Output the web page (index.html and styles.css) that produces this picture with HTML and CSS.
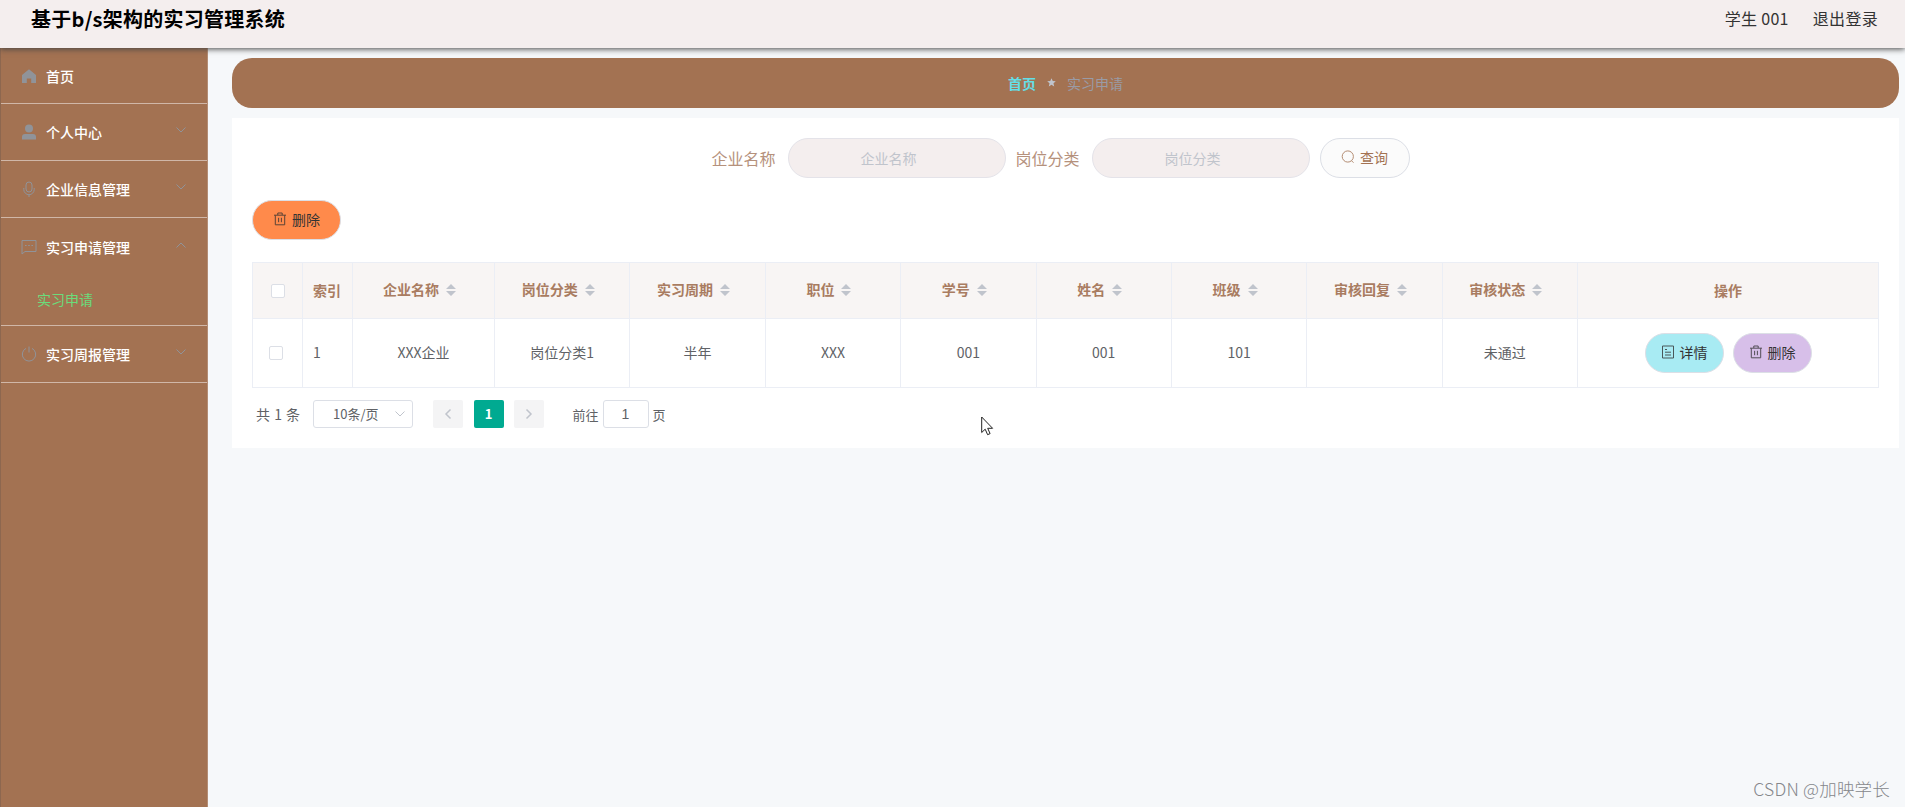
FILE: index.html
```
<!DOCTYPE html>
<html lang="zh-CN">
<head>
    <meta charset="UTF-8">
    <meta name="viewport" content="width=device-width, initial-scale=1.0">
    <title>基于b/s架构的实习管理系统</title>
    <link rel="stylesheet" href="styles.css">
</head>
<body>

    <!-- shared icons -->
    <svg width="0" height="0" class="icon-defs">
        <symbol id="icon-delete" viewBox="0 0 14 14">
            <path d="M1 3.200h12M4.800 3V1h4.400v2M2.300 3.200v9.600h9.400V3.200M5.600 5.800v4.400M8.400 5.800v4.400"/>
        </symbol>
        <symbol id="icon-arrow" viewBox="0 0 12 12">
            <path d="M1.500 3.500L6 8l4.500-4.500"/>
        </symbol>
    </svg>

    <header class="header">
        <h1 class="title">基于b/s架构的实习管理系统</h1>
        <div class="user">
            <span>学生 001</span>
            <span>退出登录</span>
        </div>
    </header>

    <div class="container">
        <aside class="sidebar">
            <div class="menu-item home">
                <svg class="menu-icon solid" viewBox="0 0 16 16"><path d="M8 1.200L15 7v8h-4.800v-4.500H5.800V15H1V7z"/></svg>
                <span>首页</span>
            </div>
            <div class="menu-item">
                <svg class="menu-icon solid" viewBox="0 0 16 16"><circle cx="8" cy="4.500" r="4"/><path d="M1 15.500v-2.500q0-3 3-3h8q3 0 3 3v2.500z"/></svg>
                <span>个人中心</span>
                <svg class="arrow"><use href="#icon-arrow"/></svg>
            </div>
            <div class="menu-item">
                <svg class="menu-icon" viewBox="0 0 16 16"><rect x="5" y="1" width="6" height="10" rx="3"/><path d="M2.800 7v1.500a5.200 5.200 0 0 0 10.400 0V7M8 13.700V16"/></svg>
                <span>企业信息管理</span>
                <svg class="arrow"><use href="#icon-arrow"/></svg>
            </div>
            <div class="menu-group">
                <div class="menu-item">
                    <svg class="menu-icon" viewBox="0 0 16 16"><path d="M1 1.500h14v11H4L1 15z"/><path d="M4 6.500h1.600M7.200 6.500h1.600M10.400 6.500H12"/></svg>
                    <span>实习申请管理</span>
                    <svg class="arrow up"><use href="#icon-arrow"/></svg>
                </div>
                <div class="submenu-item">实习申请</div>
            </div>
            <div class="menu-item">
                <svg class="menu-icon" viewBox="0 0 16 16"><path d="M5 2.400a6.700 6.700 0 1 0 6 0M8 .5v6"/></svg>
                <span>实习周报管理</span>
                <svg class="arrow"><use href="#icon-arrow"/></svg>
            </div>
        </aside>

        <main class="main">
            <div class="breadcrumb">
                <b>首页</b>
                <svg class="star" viewBox="0 0 10 10"><path d="M5 .3l1.400 3.100 3.400.3-2.600 2.200.8 3.500L5 7.600 2 9.400l.8-3.500L.2 3.700l3.400-.3z"/></svg>
                <span>实习申请</span>
            </div>

            <div class="card">
                <div class="search">
                    <label>企业名称</label>
                    <input type="text" placeholder="企业名称">
                    <label>岗位分类</label>
                    <input type="text" placeholder="岗位分类">
                    <button class="btn btn-search">
                        <svg viewBox="0 0 14 14"><circle cx="6.800" cy="6.500" r="5.600"/><path d="M10.500 10.700l2 2"/></svg>
                        查询
                    </button>
                </div>

                <button class="btn btn-delete"><svg><use href="#icon-delete"/></svg>删除</button>

                <table>
                    <colgroup>
                        <col class="col-check">
                        <col class="col-index">
                        <col class="col-company">
                        <col span="8">
                        <col class="col-action">
                    </colgroup>
                    <thead>
                        <tr id="table-head"></tr>
                    </thead>
                    <tbody>
                        <tr>
                            <td><span class="checkbox"></span></td>
                            <td class="left">1</td>
                            <td>XXX企业</td>
                            <td>岗位分类1</td>
                            <td>半年</td>
                            <td>XXX</td>
                            <td>001</td>
                            <td>001</td>
                            <td>101</td>
                            <td></td>
                            <td class="status">未通过</td>
                            <td>
                                <div class="actions">
                                    <button class="btn btn-detail"><svg viewBox="0 0 14 14"><path d="M1.500 1h11v12h-11zM4 4.500h2M4 7.200h6M4 10h6"/></svg>详情</button>
                                    <button class="btn btn-remove"><svg><use href="#icon-delete"/></svg>删除</button>
                                </div>
                            </td>
                        </tr>
                    </tbody>
                </table>

                <div class="pagination">
                    <span class="total">共 1 条</span>
                    <div class="page-size">10条/页<svg><use href="#icon-arrow"/></svg></div>
                    <span class="page prev"><svg><use href="#icon-arrow"/></svg></span>
                    <span class="page active">1</span>
                    <span class="page next"><svg><use href="#icon-arrow"/></svg></span>
                    <span class="jump">前往</span>
                    <input type="text" value="1">
                    <span>页</span>
                </div>
            </div>
        </main>
    </div>

    <svg class="cursor" viewBox="0 0 13 20"><path d="M.7 1v15.500l3.500-3.300 2.400 5.500 2.500-1.100-2.400-5.300h4.900z"/></svg>
    <div class="watermark">CSDN @加映学长</div>

    <script>
        const columns = ["企业名称", "岗位分类", "实习周期", "职位", "学号", "姓名", "班级", "审核回复", "审核状态"];

        function loadHead() {
            const sort = '<svg class="sort" viewBox="0 0 10 14"><path d="M0 6L5 1l5 5zM0 8l5 5 5-5z"/></svg>';
            let html = '<th><span class="checkbox head"></span></th><th class="left">索引</th>';
            columns.forEach(name => {
                html += `<th class="sortable">${name}${sort}</th>`;
            });
            html += "<th>操作</th>";
            document.getElementById("table-head").innerHTML = html;
        }

        loadHead();
    </script>

</body>
</html>
```
FILE: styles.css
```
* {
    box-sizing: border-box;
}
body {
    margin: 0;
    height: 100vh;
    overflow: hidden;
    display: flex;
    flex-direction: column;
    background-color: #f6f8fa;
    color: #606266;
    font-family: "Noto Sans CJK SC", sans-serif;
    font-size: 14px;
}
svg {
    fill: none;
    stroke: currentColor;
}
button, input {
    font-family: inherit;
}
.icon-defs {
    position: absolute;
}
.header {
    position: relative;
    z-index: 1;
    flex: none;
    height: 48px;
    padding: 0 27px 10px 31px;
    display: flex;
    justify-content: space-between;
    align-items: center;
    background-color: #f4eeee;
    box-shadow: 0 1px 6px #444;
}
.title {
    margin: 0;
    color: #000;
    font-size: 20px;
    line-height: 38px;
    letter-spacing: 0.25px;
}
.user {
    display: flex;
    gap: 24px;
    padding-bottom: 2px;
    color: #333;
    font-size: 16px;
    line-height: 36px;
    letter-spacing: 0.3px;
}
.container {
    flex: 1;
    display: flex;
}
.sidebar {
    width: 208px;
    flex: none;
    background-color: #a37252;
    border-left: 1px solid #8d674f;
    border-right: 1px solid #b48d75;
}
.menu-item {
    height: 57px;
    padding: 0 20px 0 20px;
    display: flex;
    align-items: center;
    color: #fff;
    border-bottom: 1px solid #d0b7a8;
}
.home {
    height: 56px;
}
.menu-item span {
    flex: 1;
    font-weight: 500;
}
.menu-group {
    border-bottom: 1px solid #d0b7a8;
}
.menu-group .menu-item {
    border-bottom: none;
}
.menu-icon {
    width: 16px;
    height: 16px;
    margin-right: 9px;
    color: #909399;
}
.solid {
    fill: currentColor;
    stroke: none;
}
.arrow {
    width: 12px;
    height: 12px;
    margin-top: -4px;
    color: #909399;
}
.up {
    transform: rotate(180deg);
}
.submenu-item {
    height: 50px;
    padding-left: 36px;
    line-height: 48px;
    color: #6bdc7b;
}
.main {
    flex: 1;
    padding: 10px 6px 0 24px;
}
.breadcrumb {
    height: 50px;
    padding-bottom: 1px;
    display: flex;
    justify-content: center;
    align-items: center;
    gap: 11px;
    border-radius: 20px;
    background-color: #a37252;
    color: #9a9ba5;
}
.breadcrumb b {
    color: #63dfe7;
}
.star {
    width: 9px;
    height: 9px;
    fill: #c0c4cc;
    stroke: none;
}
.card {
    height: 330px;
    margin-top: 10px;
    padding: 20px;
    background-color: #fff;
}
.search {
    display: flex;
    justify-content: center;
    align-items: center;
    padding-right: 10px;
}
.search label {
    margin-right: 12px;
    color: #b5917c;
    font-size: 16px;
}
.search input {
    width: 218px;
    height: 40px;
    margin-right: 10px;
    padding: 0 24px 1px 8px;
    border: 1px solid #e4e3e9;
    border-radius: 20px;
    background-color: #f4eeee;
    text-align: center;
    font-size: 14px;
}
.search input::placeholder {
    color: #c0c4cc;
}
.btn {
    height: 40px;
    display: flex;
    justify-content: center;
    align-items: center;
    gap: 5px;
    padding: 0 0 2px;
    border: 1px solid #dcdfe6;
    border-radius: 20px;
    color: #333;
    font-size: 14px;
}
.btn svg {
    width: 14px;
    height: 14px;
    opacity: 0.8;
}
.btn-search {
    width: 90px;
    background-color: #fbfbfb;
    color: #a37252;
}
.btn-delete {
    width: 89px;
    margin-top: 22px;
    background-color: #ff8a4b;
}
table {
    width: 1627px;
    margin-top: 22px;
    table-layout: fixed;
    border-collapse: collapse;
}
.col-check, .col-index {
    width: 50px;
}
.col-company {
    width: 142px;
}
.col-action {
    width: 301px;
}
th, td {
    padding: 0 0 2px;
    border: 1px solid #ebeef5;
    text-align: center;
}
th {
    height: 56px;
    background-color: #f8f5f4;
    color: #a97c61;
}
td {
    height: 69px;
}
th.sortable {
    padding: 0 8px 4px 0;
}
.left {
    padding-left: 10px;
    text-align: left;
}
.status {
    padding-right: 10px;
}
.sort {
    width: 10px;
    height: 14px;
    margin-left: 7px;
    vertical-align: -2px;
    fill: #c0c4cc;
    stroke: none;
}
.checkbox {
    display: block;
    width: 14px;
    height: 14px;
    margin-top: 2px;
    margin-left: 16px;
    border: 1px solid #dcdfe6;
    border-radius: 2px;
    background-color: #fff;
}
.head {
    margin-left: 18px;
}
.actions {
    display: flex;
    justify-content: center;
    gap: 9px;
    padding-top: 2px;
}
.actions .btn {
    width: 79px;
}
.btn-detail {
    background-color: #a8ebf3;
}
.btn-remove {
    background-color: #d7bfe9;
}
.pagination {
    height: 28px;
    margin-top: 12px;
    padding-left: 4px;
    display: flex;
    align-items: center;
    font-size: 13px;
}
.total {
    width: 57px;
    padding-bottom: 1px;
    font-size: 14px;
    word-spacing: 1px;
}
.page-size {
    width: 100px;
    height: 28px;
    margin-right: 20px;
    padding: 0 6px 1px 19px;
    display: flex;
    justify-content: space-between;
    align-items: center;
    border: 1px solid #dcdfe6;
    border-radius: 3px;
}
.page-size svg, .page svg {
    width: 12px;
    height: 12px;
    color: #c0c4cc;
}
.page {
    width: 30px;
    height: 28px;
    margin-right: 10.5px;
    display: flex;
    justify-content: center;
    align-items: center;
    border-radius: 2px;
    background-color: #f4f4f5;
}
.page svg {
    stroke-width: 1.5;
}
.active {
    padding-bottom: 1px;
    background-color: #00aa91;
    color: #fff;
    font-weight: bold;
}
.prev svg {
    transform: rotate(90deg);
}
.next svg {
    transform: rotate(-90deg);
}
.jump {
    margin-left: 18px;
}
.pagination input {
    width: 46px;
    height: 28px;
    margin: 0 4px;
    padding: 0;
    border: 1px solid #dcdfe6;
    border-radius: 3px;
    color: #606266;
    text-align: center;
    font-size: 14px;
    font-family: "Liberation Sans", sans-serif;
}
.cursor {
    position: absolute;
    left: 981px;
    top: 416px;
    width: 13px;
    height: 20px;
    fill: #fff;
    stroke: #222;
}
.watermark {
    position: absolute;
    right: 15px;
    bottom: 6px;
    color: #85878b;
    font-size: 17.5px;
    font-weight: 300;
    letter-spacing: 0.2px;
}
```
